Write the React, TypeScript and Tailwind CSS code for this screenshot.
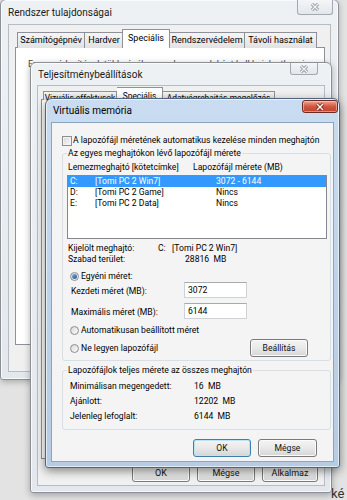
import React from "react";

function CloseX({ active = false }: { active?: boolean }) {
  return (
    <svg width="10" height="8" viewBox="0 0 10 8">
      <path d="M2 1 L8 7 M8 1 L2 7" stroke={active ? "#7a2315" : "#858c94"} strokeWidth="3" />
      <path d="M2 1 L8 7 M8 1 L2 7" stroke={active ? "#ffffff" : "#f6f7f9"} strokeWidth="1.4" />
    </svg>
  );
}

function Btn({ children, className = "", def = false }: { children: React.ReactNode; className?: string; def?: boolean }) {
  return (
    <div
      className={`flex h-[18px] shrink-0 items-center justify-center rounded-[3px] border bg-linear-to-b from-[#f4f4f4] via-[#e9e9e9] to-[#d5d5d5] text-[#111] ${
        def ? "border-[#3c7fb1] shadow-[inset_0_0_0_1px_#bde3f7]" : "border-[#7a7a7a] shadow-[inset_0_0_0_1px_#fbfbfb]"
      } ${className}`}
    >
      {children}
    </div>
  );
}

function Radio({ checked = false }: { checked?: boolean }) {
  return (
    <span className="flex h-[9px] w-[9px] shrink-0 items-center justify-center rounded-full border border-[#8d8d8d] bg-linear-to-br from-[#d9d9d9] to-[#fbfbfb]">
      {checked && <span className="h-[5px] w-[5px] rounded-full bg-linear-to-br from-[#7fb3e6] to-[#17509a]" />}
    </span>
  );
}

function Field({ value }: { value: string }) {
  return (
    <div className="flex h-[16px] w-[63px] items-center border border-[#cdd1d8] border-t-[#a6aab2] bg-white pl-[3px]">{value}</div>
  );
}

export default function App() {
  return (
    <div className="relative h-[500px] w-[347px] overflow-hidden bg-[#e3e3e3] font-[Roboto,sans-serif] text-[9px] leading-[11px] text-black">
      {/* Window 1: Rendszer tulajdonságai */}
      <div className="absolute left-0 top-[-1px] z-0 flex h-[381px] w-[339px] flex-col rounded-t-[6px] rounded-b-[3px] border border-[#8a9098] bg-linear-to-b from-[#eef1f4] to-[#e4e8ec] shadow-[0_2px_6px_rgba(0,0,0,0.25),inset_0_0_0_1px_rgba(255,255,255,0.7)]">
        <div className="relative flex h-[24px] shrink-0 items-center pl-[7px] text-[#1a1a1a]">
          <span className="text-[10px]">Rendszer tulajdonságai</span>
          <div className="absolute right-[5px] top-0 flex h-[15px] w-[36px] items-center justify-center rounded-b-[3px] border border-t-0 border-[#a2a9b2] bg-linear-to-b from-[#f4f6f8] to-[#e3e7eb]">
            <CloseX />
          </div>
        </div>
        <div className="mx-[7px] mb-[7px] flex flex-1 flex-col border border-[#b4bcc6] bg-[#f0f0f0]">
          <div className="relative z-10 ml-[6px] mt-[4px] mb-[-1px] flex h-[19px] items-end pl-[2px]">
            <div className="flex h-[16px] w-[68px] items-center justify-center whitespace-nowrap border border-b-0 border-[#8e9199] bg-linear-to-b from-[#f5f5f5] to-[#e2e2e2]">Számítógépnév</div>
            <div className="flex h-[16px] w-[39px] items-center justify-center whitespace-nowrap border border-b-0 border-l-0 border-[#8e9199] bg-linear-to-b from-[#f5f5f5] to-[#e2e2e2]">Hardver</div>
            <div className="relative z-10 ml-[-2px] flex h-[19px] w-[48px] items-center justify-center whitespace-nowrap border border-b-0 border-[#8e9199] bg-white pb-[2px]">Speciális</div>
            <div className="flex h-[16px] w-[75px] items-center justify-center whitespace-nowrap border border-b-0 border-l-0 border-[#8e9199] bg-linear-to-b from-[#f5f5f5] to-[#e2e2e2]">Rendszervédelem</div>
            <div className="flex h-[16px] w-[72px] items-center justify-center whitespace-nowrap border border-b-0 border-l-0 border-[#8e9199] bg-linear-to-b from-[#f5f5f5] to-[#e2e2e2]">Távoli használat</div>
          </div>
          <div className="ml-[6px] mr-[5px] h-[298px] border border-[#8e9199] bg-white pl-[12px] pt-[11px]">
            <div className="whitespace-nowrap text-[#444]">Ezen módosítások többségéhez rendszergazdaként kell bejelentkeznie.</div>
          </div>
        </div>
      </div>

      {/* Window 2: Teljesítménybeállítások */}
      <div className="absolute left-[30px] top-[62px] z-10 flex h-[431px] w-[302px] flex-col rounded-t-[6px] rounded-b-[3px] border border-[#8a9098] bg-linear-to-b from-[#eef1f4] to-[#e4e8ec] shadow-[0_2px_7px_rgba(0,0,0,0.3),inset_0_0_0_1px_rgba(255,255,255,0.7)]">
        <div className="relative flex h-[22px] shrink-0 items-center pl-[7px] text-[#1a1a1a]">
          <span className="text-[10px]">Teljesítménybeállítások</span>
          <div className="absolute right-[13px] top-0 flex h-[12px] w-[28px] items-center justify-center rounded-b-[3px] border border-t-0 border-[#a2a9b2] bg-linear-to-b from-[#f4f6f8] to-[#e3e7eb]">
            <CloseX />
          </div>
        </div>
        <div className="mx-[6px] mb-[6px] flex flex-1 flex-col border border-[#b4bcc6] bg-[#f0f0f0]">
          <div className="relative z-10 ml-[3px] mt-[1px] mb-[-1px] flex h-[13px] items-end pl-[2px] text-[8.4px]">
            <div className="flex h-[9px] w-[74px] items-start justify-center whitespace-nowrap border border-b-0 border-[#8e9199] bg-linear-to-b from-[#f5f5f5] to-[#e2e2e2] pt-[1px]">Vizuális effektusok</div>
            <div className="flex h-[13px] w-[46px] items-start justify-center whitespace-nowrap border border-b-0 border-l-0 border-[#8e9199] bg-white pt-[3px]">Speciális</div>
            <div className="flex h-[9px] w-[112px] items-start justify-center whitespace-nowrap border border-b-0 border-l-0 border-[#8e9199] bg-linear-to-b from-[#f5f5f5] to-[#e2e2e2] pt-[1px]">Adatvégrehajtás-megelőzés</div>
          </div>
          <div className="ml-[3px] mr-[3px] h-[360px] border border-[#8e9199] bg-white" />
          <div className="mr-[6px] mt-[5px] flex justify-end gap-[7px]">
            <Btn className="w-[58px]">OK</Btn>
            <Btn className="w-[58px]">Mégse</Btn>
            <Btn className="w-[56px]">Alkalmaz</Btn>
          </div>
        </div>
      </div>

      {/* Window 3: Virtuális memória */}
      <div className="absolute left-[45px] top-[98px] z-20 flex h-[370px] w-[295px] flex-col rounded-t-[7px] rounded-b-[3px] border border-[#4f6680] bg-linear-to-b from-[#cadcf1] via-[#bfd3ea] to-[#b6cbe4] shadow-[0_3px_10px_rgba(0,0,0,0.45),inset_0_0_0_1px_rgba(255,255,255,0.6)]">
        <div className="relative flex h-[23px] shrink-0 items-center pl-[7px]">
          <span className="text-[10px]">Virtuális memória</span>
          <div className="absolute right-[1px] top-[1px] flex h-[13px] w-[36px] items-center justify-center rounded-[3px] border border-[#6b2a22] bg-linear-to-b from-[#e9a597] via-[#d2573f] to-[#c0412a] shadow-[inset_0_0_0_1px_rgba(255,220,210,0.5)]">
            <CloseX active />
          </div>
        </div>
        <div className="mx-[5px] mb-[5px] flex flex-1 flex-col border border-[#8ea3bc] bg-[#f4f4f4] pl-[10px] pr-[2px] text-[8.6px]">
          <div className="mt-[12px] flex h-[11px] items-center gap-[1px]">
            <span className="h-[10px] w-[10px] border border-[#8d8d8d] bg-linear-to-br from-[#d6d6d6] to-[#fbfbfb] shadow-[inset_0_0_0_1px_#f2f2f2]" />
            <span className="whitespace-nowrap">A lapozófájl méretének automatikus kezelése minden meghajtón</span>
          </div>

          <fieldset className="mt-[2px] rounded-[3px] border border-[#d5dfe5] pb-[4px] pl-[4px] pr-[3px]">
            <legend className="h-[11px] px-[1px]">Az egyes meghajtókon lévő lapozófájl mérete</legend>
            <div className="mt-[3px] flex h-[11px] pl-[1px]">
              <span className="w-[125px]">Lemezmeghajtó [kötetcímke]</span>
              <span>Lapozófájl mérete (MB)</span>
            </div>
            <div className="mt-[2px] flex h-[64px] flex-col border border-[#828790] bg-white">
              <div className="flex h-[11px] bg-[#3399ff] pl-[2px] text-white">
                <span className="w-[25px]">C:</span>
                <span className="w-[121px]">[Tomi PC 2 Win7]</span>
                <span>3072 - 6144</span>
              </div>
              <div className="flex h-[11px] pl-[2px]">
                <span className="w-[25px]">D:</span>
                <span className="w-[121px]">[Tomi PC 2 Game]</span>
                <span>Nincs</span>
              </div>
              <div className="flex h-[11px] pl-[2px]">
                <span className="w-[25px]">E:</span>
                <span className="w-[121px]">[Tomi PC 2 Data]</span>
                <span>Nincs</span>
              </div>
            </div>
            <div className="mt-[4px] flex h-[11px] pl-[1px]">
              <span className="w-[90px]">Kijelölt meghajtó:</span>
              <span className="whitespace-pre">C:   [Tomi PC 2 Win7]</span>
            </div>
            <div className="flex h-[11px] pl-[1px]">
              <span className="w-[117px]">Szabad terület:</span>
              <span className="whitespace-pre">28816  MB</span>
            </div>
            <div className="mt-[6px] flex h-[11px] items-center gap-[2px] pl-[3px]">
              <Radio checked />
              <span>Egyéni méret:</span>
            </div>
            <div className="flex h-[16px] items-center pl-[4px]">
              <span className="w-[113px] pt-[3px]">Kezdeti méret (MB):</span>
              <Field value="3072" />
            </div>
            <div className="mt-[5px] flex h-[16px] items-center pl-[4px]">
              <span className="w-[113px] pt-[2px]">Maximális méret (MB):</span>
              <Field value="6144" />
            </div>
            <div className="mt-[6px] flex h-[11px] items-center gap-[2px] pl-[3px]">
              <Radio />
              <span>Automatikusan beállított méret</span>
            </div>
            <div className="mt-[4px] flex h-[16px] items-center gap-[2px] pl-[3px]">
              <Radio />
              <span>Ne legyen lapozófájl</span>
              <Btn className="ml-auto mr-[19px] h-[16px] w-[58px]">Beállítás</Btn>
            </div>
          </fieldset>

          <fieldset className="mt-[4px] rounded-[3px] border border-[#d5dfe5] pb-[7px] pl-[4px] pr-[3px]">
            <legend className="h-[11px] px-[1px]">Lapozófájlok teljes mérete az összes meghajtón</legend>
            <div className="mt-[5px] flex flex-col gap-[4px] pl-[3px]">
              <div className="flex h-[11px]">
                <span className="w-[124px]">Minimálisan megengedett:</span>
                <span className="whitespace-pre">16  MB</span>
              </div>
              <div className="flex h-[11px]">
                <span className="w-[124px]">Ajánlott:</span>
                <span className="whitespace-pre">12202  MB</span>
              </div>
              <div className="flex h-[11px]">
                <span className="w-[124px]">Jelenleg lefoglalt:</span>
                <span className="whitespace-pre">6144  MB</span>
              </div>
            </div>
          </fieldset>

          <div className="mr-[14px] mt-[9px] flex justify-end gap-[7px]">
            <Btn def className="w-[58px]">OK</Btn>
            <Btn className="w-[59px]">Mégse</Btn>
          </div>
        </div>
      </div>

      <span className="absolute left-[331px] top-[486px] z-0 text-[13px] leading-[16px] text-[#333]">ké</span>
    </div>
  );
}
